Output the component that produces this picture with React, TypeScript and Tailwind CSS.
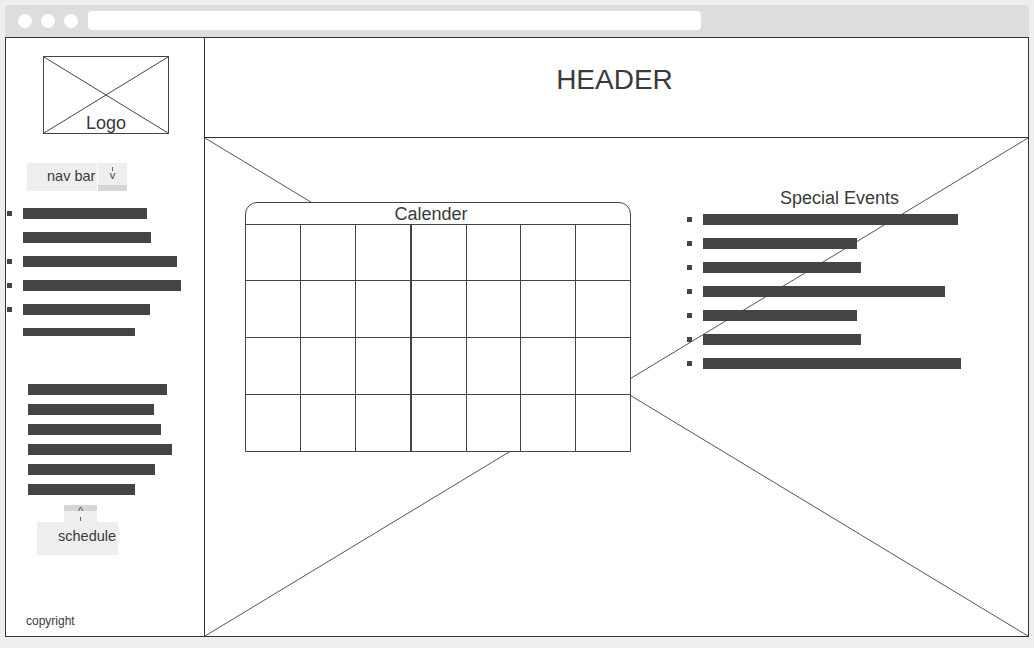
import React from "react";

const font = { fontFamily: '"Liberation Sans", Arial, sans-serif' };

const list1 = [
  { w: 124, b: true, h: 11 },
  { w: 128, b: false, h: 11 },
  { w: 154, b: true, h: 11 },
  { w: 158, b: true, h: 11 },
  { w: 127, b: true, h: 11 },
  { w: 112, b: false, h: 8 },
];
const list2 = [139, 126, 133, 144, 127, 107];
const events = [255, 154, 158, 242, 154, 158, 258];

function XLines({ stroke = "#444" }: { stroke?: string }) {
  return (
    <svg
      className="absolute inset-0 w-full h-full"
      viewBox="0 0 100 100"
      preserveAspectRatio="none"
    >
      <line x1="0" y1="0" x2="100" y2="100" stroke={stroke} strokeWidth="1" vectorEffect="non-scaling-stroke" />
      <line x1="100" y1="0" x2="0" y2="100" stroke={stroke} strokeWidth="1" vectorEffect="non-scaling-stroke" />
    </svg>
  );
}

export default function App() {
  return (
    <div className="w-[1034px] h-[648px] bg-[#eeeeee] pt-[5px] px-[5px] text-[#3a3a3a]" style={font}>
      {/* browser chrome */}
      <div className="h-[32px] bg-[#dddddd] rounded-t-[4px] flex items-center pl-[13px]">
        <div className="flex gap-[9px] mr-[10px]">
          <div className="w-[14px] h-[14px] rounded-full bg-white" />
          <div className="w-[14px] h-[14px] rounded-full bg-white" />
          <div className="w-[14px] h-[14px] rounded-full bg-white" />
        </div>
        <div className="w-[613px] h-[19px] bg-white rounded-[4px] mb-[1px]" />
      </div>

      {/* frame */}
      <div className="h-[600px] border border-[#333333] bg-white flex">
        {/* sidebar */}
        <div className="w-[199px] h-full border-r border-[#333333] flex flex-col">
          <div className="relative ml-[37px] mt-[18px] w-[126px] h-[78px] border border-[#444444] flex items-end justify-center">
            <XLines />
            <span className="relative text-[18px] leading-[20px]">Logo</span>
          </div>

          <div className="flex ml-[21px] mt-[29px] h-[28px]">
            <div className="w-[70px] h-full bg-[#eeeeee] flex items-center pl-[20px] text-[14.5px]">nav bar</div>
            <div className="ml-[1px] w-[29px] h-full bg-[#eeeeee] flex flex-col">
              <div className="flex-1 flex flex-col items-center pt-[4px]">
                <div className="w-px h-[4px] bg-[#666666]" />
                <span className="text-[11px] leading-[9px] text-[#444444]">v</span>
              </div>
              <div className="h-[6px] bg-[#d6d6d6]" />
            </div>
          </div>

          <div className="mt-[17px] flex flex-col gap-[13px]">
            {list1.map((r, i) => (
              <div key={i} className="flex items-center pl-[1px]" style={{ height: r.h }}>
                <div className={r.b ? "w-[5px] h-[5px] bg-[#444444]" : "w-[5px] h-[5px]"} />
                <div className="ml-[11px] bg-[#444444]" style={{ width: r.w, height: r.h }} />
              </div>
            ))}
          </div>

          <div className="mt-[48px] pl-[22px] flex flex-col gap-[9px]">
            {list2.map((w, i) => (
              <div key={i} className="h-[11px] bg-[#444444]" style={{ width: w }} />
            ))}
          </div>

          <div className="mt-[10px] ml-[58px] w-[33px] h-[17px] bg-[#eeeeee] flex flex-col items-center relative">
            <div className="absolute top-0 left-0 right-0 h-[6px] bg-[#d6d6d6]" />
            <span className="relative text-[11px] leading-[9px] mt-[2px] text-[#444444]">^</span>
            <div className="relative w-px h-[4px] bg-[#666666] mt-[1px]" />
          </div>
          <div className="ml-[31px] w-[81px] h-[33px] bg-[#eeeeee] flex items-center pl-[21px] pb-[3px] text-[14.5px]">schedule</div>

          <div className="mt-auto pl-[20px] pb-[8px] text-[12px] leading-[14px]">copyright</div>
        </div>

        {/* main */}
        <div className="flex-1 flex flex-col">
          <div className="h-[100px] border-b border-[#333333] flex justify-center pt-[26px] pr-[4px]">
            <span className="text-[28px] leading-[32px]">HEADER</span>
          </div>
          <div className="flex-1 relative">
            <svg className="absolute inset-0 w-full h-full" viewBox="0 0 100 100" preserveAspectRatio="none">
              <line x1="0" y1="0" x2="100" y2="100" stroke="#555" strokeWidth="1" vectorEffect="non-scaling-stroke" />
              <line x1="100" y1="0" x2="0" y2="100" stroke="#555" strokeWidth="1" vectorEffect="non-scaling-stroke" />
            </svg>
            <div className="relative flex items-start pl-[40px] pt-[49px]">
              {/* calendar */}
              <div className="mt-[15px] w-[386px] border border-[#444444] rounded-t-[12px] bg-white">
                <div className="h-[22px] border-b border-[#444444] flex items-center justify-center pr-[14px] text-[18px] leading-[18px]">
                  Calender
                </div>
                <div className="grid grid-cols-[54px_54px_54px_55px_53px_54px_54px] grid-rows-[55px_56px_56px_56px] gap-px bg-[#444444]">
                  {Array.from({ length: 28 }).map((_, i) => (
                    <div key={i} className={i % 7 === 3 ? "bg-white border-l border-[#444444]" : "bg-white"} />
                  ))}
                </div>
              </div>

              {/* special events */}
              <div className="ml-[56px] w-[305px]">
                <div className="text-center text-[18px] leading-[20px] pt-[1px]">Special Events</div>
                <div className="mt-[6px] flex flex-col gap-[13px]">
                  {events.map((w, i) => (
                    <div key={i} className="h-[11px] flex items-center">
                      <div className="w-[5px] h-[5px] bg-[#444444]" />
                      <div className="ml-[11px] h-[11px] bg-[#444444]" style={{ width: w }} />
                    </div>
                  ))}
                </div>
              </div>
            </div>
          </div>
        </div>
      </div>
    </div>
  );
}
